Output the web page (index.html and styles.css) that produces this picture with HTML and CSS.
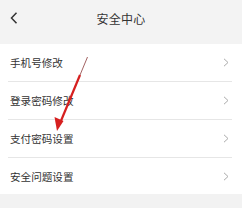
FILE: index.html
```html
<!DOCTYPE html>
<html lang="zh">
<head>
<meta charset="utf-8">
<link rel="stylesheet" href="styles.css">
</head>
<body>
<div class="page">
  <header class="header">
    <svg class="back" width="8" height="12" viewBox="0 0 8 12"><path d="M6.5 0.8 L1.5 6 L6.5 11.2" fill="none" stroke="#333" stroke-width="1.5"/></svg>
    <div class="title">安全中心</div>
  </header>
  <ul class="list">
    <li class="row"><span>手机号修改</span><svg class="chev" width="6" height="9" viewBox="0 0 6 9"><path d="M1 0.8 L5 4.5 L1 8.2" fill="none" stroke="#aaa" stroke-width="1"/></svg></li>
    <li class="row"><span>登录密码修改</span><svg class="chev" width="6" height="9" viewBox="0 0 6 9"><path d="M1 0.8 L5 4.5 L1 8.2" fill="none" stroke="#aaa" stroke-width="1"/></svg></li>
    <li class="row"><span>支付密码设置</span><svg class="chev" width="6" height="9" viewBox="0 0 6 9"><path d="M1 0.8 L5 4.5 L1 8.2" fill="none" stroke="#aaa" stroke-width="1"/></svg></li>
    <li class="row"><span>安全问题设置</span><svg class="chev" width="6" height="9" viewBox="0 0 6 9"><path d="M1 0.8 L5 4.5 L1 8.2" fill="none" stroke="#aaa" stroke-width="1"/></svg></li>
  </ul>
  <svg class="arrow" width="242" height="208" viewBox="0 0 242 208">
    <path d="M87.5 57 L60.5 122" stroke="#8a3a3a" stroke-width="0.8" fill="none"/>
    <path d="M80 75 L60.5 122" stroke="#d61f1f" stroke-width="2.2" fill="none"/>
    <polygon points="57,131 54.5,117 63.5,121" fill="#d61f1f"/>
  </svg>
</div>
</body>
</html>
```
FILE: styles.css
```css
* { box-sizing: border-box; }
html, body { margin: 0; padding: 0; }
body {
  background: #f2f2f2;
  font-family: "Noto Sans CJK SC", "Noto Sans", sans-serif;
  color: #333;
}
.page {
  position: relative;
  width: 242px;
  height: 208px;
  overflow: hidden;
}
.header {
  height: 44px;
  display: flex;
  align-items: center;
  justify-content: center;
  position: relative;
  background: #f3f3f3;
}
.back {
  position: absolute;
  left: 10px;
  top: 12px;
}
.title {
  font-size: 12px;
  color: #333;
  margin-top: -8px;
  letter-spacing: 0.2px;
}
.list {
  list-style: none;
  margin: 0;
  padding: 0 0 0 8px;
  background: #fff;
}
.row {
  height: 38px;
  display: flex;
  align-items: center;
  justify-content: space-between;
  padding: 0 13px 0 2px;
  border-bottom: 1px solid #e6e6e6;
  margin-right: 10px;
  font-size: 10.6px;
  color: #333;
}
.row:last-child {
  border-bottom: none;
  height: 36px;
}
.chev { margin-right: -10px; }
.arrow {
  position: absolute;
  left: 0;
  top: 0;
  pointer-events: none;
}
```
